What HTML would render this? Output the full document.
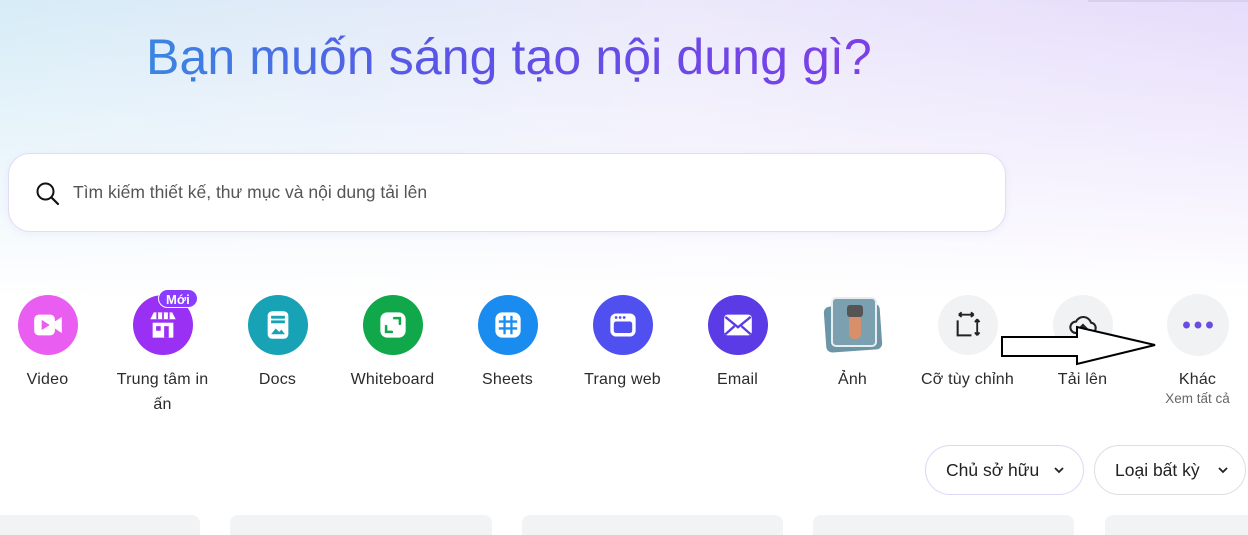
<!DOCTYPE html>
<html><head><meta charset="utf-8"><style>
*{margin:0;padding:0;box-sizing:border-box}
body{width:1248px;height:523px;overflow:hidden;font-family:"Liberation Sans",sans-serif;background:#fff;position:relative}
.bg{position:absolute;left:0;top:0;width:1248px;height:300px;background:linear-gradient(180deg,rgba(255,255,255,0) 0%,#fff 100%),linear-gradient(90deg,#d6ecf7 0%,#ece9fb 55%,#e6dcfb 100%)}
h1{position:absolute;left:146px;top:28px;font-size:50px;font-weight:400;letter-spacing:0.1px;background:linear-gradient(90deg,#3a86e0 0%,#5a55e6 40%,#7c3fe6 100%);-webkit-background-clip:text;background-clip:text;color:transparent;white-space:nowrap}
.search{position:absolute;left:8px;top:153px;width:998px;height:79px;background:#fff;border:1px solid #e2dcf6;border-radius:22px;box-shadow:0 2px 8px rgba(120,100,200,.08)}
.search span{position:absolute;left:64px;top:28px;font-size:17.5px;color:#555}
.item{position:absolute;top:295px;width:115px;text-align:center}
.c{width:60px;height:60px;border-radius:50%;margin:0 auto;position:relative;display:flex;align-items:center;justify-content:center}
.c svg{transform:scale(1.15)}
.l{margin-top:12px;font-size:16px;color:#2b2b2b;line-height:25px;white-space:nowrap;letter-spacing:0.2px}
.s{font-size:13.5px;color:#666;line-height:14px}
.badge{position:absolute;left:158px;top:289px;background:#8b3dff;color:#fff;font-size:13px;font-weight:bold;padding:0 7px;height:19px;line-height:19px;border-radius:10px;border:1px solid #fff}
.btn{position:absolute;top:445px;height:50px;border-radius:25px;background:#fff;font-size:17.5px;color:#222;line-height:48px;padding-left:20px}
.card{position:absolute;top:515px;height:20px;background:#f2f3f5;border-radius:8px 8px 0 0}
</style></head><body>
<div class="bg"></div>
<div style="position:absolute;right:0;top:0;width:160px;height:2px;background:#d8d0ec"></div>
<h1>Bạn muốn sáng tạo nội dung gì?</h1>
<div class="search">
<svg style="position:absolute;left:26px;top:27px" width="26" height="26" viewBox="0 0 26 26"><circle cx="10.5" cy="10.5" r="8" fill="none" stroke="#111" stroke-width="2"/><path d="M16.5 16.5L23 23" stroke="#111" stroke-width="2.2" stroke-linecap="round"/></svg>
<span>Tìm kiếm thiết kế, thư mục và nội dung tải lên</span></div>

<div class="item" style="left:-10px"><div class="c" style="background:#e95ef0"><svg width="30" height="30" viewBox="0 0 30 30"><rect x="3" y="6" width="18" height="18" rx="4" fill="#fff"/><path d="M21 12l6-4v14l-6-4z" fill="#fff"/><path d="M9.5 10.5v9l7-4.5z" fill="#e95ef0"/></svg></div><div class="l">Video</div></div>
<div class="item" style="left:105px"><div class="c" style="background:#9b30f5"><svg width="30" height="30" viewBox="0 0 30 30"><path d="M4 10 L7 4 H23 L26 10 Z" fill="#fff"/><rect x="6" y="13" width="18" height="13" fill="#fff"/><rect x="9" y="16" width="4" height="4" fill="#9b30f5"/><rect x="16" y="16" width="4" height="10" fill="#9b30f5"/><path d="M10 4v6M15 4v6M20 4v6" stroke="#9b30f5" stroke-width="1.5"/></svg></div><div class="l">Trung tâm in<br>ấn</div></div>
<div class="badge">Mới</div>
<div class="item" style="left:220px"><div class="c" style="background:#17a2b6"><svg width="30" height="30" viewBox="0 0 30 30"><rect x="6" y="3" width="18" height="24" rx="4" fill="#fff"/><rect x="9" y="7" width="12" height="2.5" fill="#17a2b6"/><rect x="9" y="11" width="12" height="2.5" fill="#17a2b6"/><path d="M9 23l4-5 3 3 2-2 3 4z" fill="#17a2b6"/></svg></div><div class="l">Docs</div></div>
<div class="item" style="left:335px"><div class="c" style="background:#11a84c"><svg width="30" height="30" viewBox="0 0 30 30"><rect x="4" y="4" width="22" height="22" rx="6" fill="#fff"/><path d="M16 9h5v5M9 16v5h5" stroke="#11a84c" stroke-width="2.2" fill="none" stroke-linecap="round"/></svg></div><div class="l">Whiteboard</div></div>
<div class="item" style="left:450px"><div class="c" style="background:#1a8cf0"><svg width="30" height="30" viewBox="0 0 30 30"><rect x="4" y="4" width="22" height="22" rx="6" fill="#fff"/><path d="M7 12h16M7 18h16M12 7v16M18 7v16" stroke="#1a8cf0" stroke-width="2"/></svg></div><div class="l">Sheets</div></div>
<div class="item" style="left:565px"><div class="c" style="background:#5050f0"><svg width="30" height="30" viewBox="0 0 30 30"><rect x="4" y="5" width="22" height="20" rx="5" fill="#fff"/><rect x="7" y="12" width="16" height="10" rx="2" fill="#5050f0"/><circle cx="9" cy="8.5" r="1.2" fill="#5050f0"/><circle cx="12.5" cy="8.5" r="1.2" fill="#5050f0"/><circle cx="16" cy="8.5" r="1.2" fill="#5050f0"/></svg></div><div class="l">Trang web</div></div>
<div class="item" style="left:680px"><div class="c" style="background:#5b3be6"><svg width="32" height="32" viewBox="0 0 32 32"><rect x="4" y="7" width="24" height="18" rx="3" fill="#fff"/><path d="M5 9l11 9 11-9M5 24l8-7M27 24l-8-7" stroke="#5b3be6" stroke-width="2" fill="none"/></svg></div><div class="l">Email</div></div>
<div class="item" style="left:795px"><div class="c"><div style="position:absolute;left:2px;top:10px;width:56px;height:46px;border-radius:6px;background:#6d95a8;transform:rotate(-4deg)"></div><div style="position:absolute;left:8px;top:2px;width:46px;height:50px;border-radius:5px;background:#7ba0b0;border:2px solid #e8eef0"><div style="position:absolute;left:16px;top:16px;width:12px;height:24px;background:#d9906a;border-radius:5px"></div><div style="position:absolute;left:14px;top:6px;width:16px;height:12px;background:#555;border-radius:3px"></div></div></div><div class="l">Ảnh</div></div>
<div class="item" style="left:910px"><div class="c" style="background:#f1f2f4"><svg width="30" height="30" viewBox="0 0 30 30"><path d="M6 11v13h12" stroke="#222" stroke-width="1.8" fill="none"/><path d="M7 6h13M7 6l2.5-2M7 6l2.5 2M20 6l-2.5-2M20 6l-2.5 2M23 10v14M23 10l-2 2.5M23 10l2 2.5M23 24l-2-2.5M23 24l2-2.5" stroke="#222" stroke-width="1.6" fill="none"/></svg></div><div class="l">Cỡ tùy chỉnh</div></div>
<div class="item" style="left:1025px"><div class="c" style="background:#f1f2f4"><svg width="30" height="30" viewBox="0 0 30 30"><path d="M9 22a5 5 0 0 1 0-10 7 7 0 0 1 13 1 4.5 4.5 0 0 1-1 9" stroke="#222" stroke-width="1.8" fill="none"/><path d="M15 24v-9M11.5 18.5L15 15l3.5 3.5" stroke="#222" stroke-width="1.8" fill="none"/></svg></div><div class="l">Tải lên</div></div>
<div class="item" style="left:1140px"><div class="c" style="background:#f1f2f4;width:62px;height:62px;margin-top:-1px"><svg width="30" height="10" viewBox="0 0 30 10"><circle cx="5" cy="5" r="3" fill="#6a4ce0"/><circle cx="15" cy="5" r="3" fill="#6a4ce0"/><circle cx="25" cy="5" r="3" fill="#6a4ce0"/></svg></div><div class="l" style="margin-top:11px">Khác</div><div class="s">Xem tất cả</div></div>

<svg style="position:absolute;left:0;top:0" width="1248" height="523"><polygon points="1002,337 1077,337 1077,327 1155,345 1077,364 1077,356 1002,356" fill="#fff" stroke="#000" stroke-width="2"/></svg>

<div class="btn" style="left:925px;width:159px;border:1px solid #ddd6f7">Chủ sở hữu<svg style="position:absolute;right:18px;top:20px" width="12" height="8" viewBox="0 0 12 8"><path d="M2 2l4 4 4-4" stroke="#222" stroke-width="1.8" fill="none"/></svg></div>
<div class="btn" style="left:1094px;width:152px;border:1px solid #ddd">Loại bất kỳ<svg style="position:absolute;right:16px;top:20px" width="12" height="8" viewBox="0 0 12 8"><path d="M2 2l4 4 4-4" stroke="#222" stroke-width="1.8" fill="none"/></svg></div>

<div class="card" style="left:-8px;width:208px"></div>
<div class="card" style="left:230px;width:262px"></div>
<div class="card" style="left:522px;width:261px"></div>
<div class="card" style="left:813px;width:261px"></div>
<div class="card" style="left:1105px;width:160px"></div>
</body></html>
